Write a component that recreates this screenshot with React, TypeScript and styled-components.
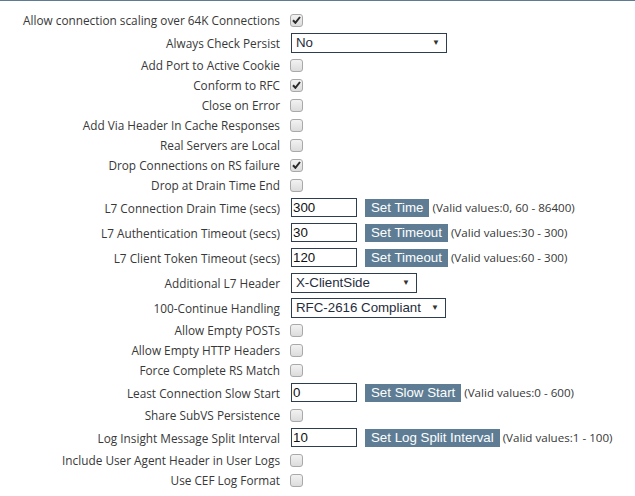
import React from "react";
import styled, { createGlobalStyle } from "styled-components";

const GlobalStyle = createGlobalStyle`
  body {
    margin: 0;
    background: #ffffff;
    font-family: "Open Sans", "Liberation Sans", sans-serif;
    color: #333333;
  }
`;

const Panel = styled.div`
  border-top: 1px solid #5f7b94;
  padding-top: 9px;
  display: grid;
  grid-template-columns: 280px 1fr;
  column-gap: 10px;
`;

const Label = styled.div<{ $tall?: boolean }>`
  height: ${(p) => (p.$tall ? 25 : 20)}px;
  display: flex;
  align-items: center;
  justify-content: flex-end;
  font-size: 11.8px;
  color: #383838;
  white-space: nowrap;
`;

const Control = styled.div<{ $tall?: boolean }>`
  height: ${(p) => (p.$tall ? 25 : 20)}px;
  display: flex;
  align-items: center;
`;

const Box = styled.span`
  width: 11px;
  height: 11px;
  border: 1px solid #a9a9a9;
  border-radius: 3px;
  background: linear-gradient(#f2f2f2, #dcdcdc);
  display: flex;
  align-items: center;
  justify-content: center;
`;

const SelectBox = styled.div<{ $width: number }>`
  box-sizing: border-box;
  width: ${(p) => p.$width}px;
  height: 20px;
  border: 1px solid #2c3e50;
  padding: 0 6px 0 4px;
  margin-left: 1px;
  display: flex;
  align-items: center;
  justify-content: space-between;
  font-family: "Liberation Sans", Arial, sans-serif;
  font-size: 13.3px;
  color: #1f2d3d;
`;

const Arrow = styled.span`
  font-size: 8px;
  color: #333333;
`;

const TextInput = styled.div`
  box-sizing: border-box;
  width: 66px;
  height: 19px;
  border: 1px solid #2c3e50;
  margin-left: 1px;
  padding-left: 1px;
  display: flex;
  align-items: center;
  font-family: "Liberation Sans", Arial, sans-serif;
  font-size: 13.3px;
  color: #111111;
`;

const ActionButton = styled.button`
  height: 18px;
  margin-left: 8px;
  padding: 0 6px;
  border: none;
  background: #5e7d94;
  color: #ffffff;
  font-family: "Liberation Sans", Arial, sans-serif;
  font-size: 13.3px;
  line-height: 18px;
`;

const Hint = styled.span`
  margin-left: 3px;
  font-size: 11.6px;
  color: #383838;
`;

const Check = () => (
  <svg width="9" height="8" viewBox="0 0 9 8">
    <path d="M1 4.2 L3.4 6.8 L8 1" fill="none" stroke="#2b2b2b" strokeWidth="2" />
  </svg>
);

type Row =
  | { kind: "check"; label: string; checked?: boolean }
  | { kind: "select"; label: string; value: string; width: number }
  | { kind: "input"; label: string; value: string; action: string; hint: string };

const rows: Row[] = [
  { kind: "check", label: "Allow connection scaling over 64K Connections", checked: true },
  { kind: "select", label: "Always Check Persist", value: "No", width: 156 },
  { kind: "check", label: "Add Port to Active Cookie" },
  { kind: "check", label: "Conform to RFC", checked: true },
  { kind: "check", label: "Close on Error" },
  { kind: "check", label: "Add Via Header In Cache Responses" },
  { kind: "check", label: "Real Servers are Local" },
  { kind: "check", label: "Drop Connections on RS failure", checked: true },
  { kind: "check", label: "Drop at Drain Time End" },
  { kind: "input", label: "L7 Connection Drain Time (secs)", value: "300", action: "Set Time", hint: "(Valid values:0, 60 - 86400)" },
  { kind: "input", label: "L7 Authentication Timeout (secs)", value: "30", action: "Set Timeout", hint: "(Valid values:30 - 300)" },
  { kind: "input", label: "L7 Client Token Timeout (secs)", value: "120", action: "Set Timeout", hint: "(Valid values:60 - 300)" },
  { kind: "select", label: "Additional L7 Header", value: "X-ClientSide", width: 126 },
  { kind: "select", label: "100-Continue Handling", value: "RFC-2616 Compliant", width: 155 },
  { kind: "check", label: "Allow Empty POSTs" },
  { kind: "check", label: "Allow Empty HTTP Headers" },
  { kind: "check", label: "Force Complete RS Match" },
  { kind: "input", label: "Least Connection Slow Start", value: "0", action: "Set Slow Start", hint: "(Valid values:0 - 600)" },
  { kind: "check", label: "Share SubVS Persistence" },
  { kind: "input", label: "Log Insight Message Split Interval", value: "10", action: "Set Log Split Interval", hint: "(Valid values:1 - 100)" },
  { kind: "check", label: "Include User Agent Header in User Logs" },
  { kind: "check", label: "Use CEF Log Format" },
];

const App = () => (
  <>
    <GlobalStyle />
    <Panel>
      {rows.map((row) => {
        const tall = row.kind !== "check";
        return (
          <React.Fragment key={row.label}>
            <Label $tall={tall}>{row.label}</Label>
            <Control $tall={tall}>
              {row.kind === "check" && <Box>{row.checked && <Check />}</Box>}
              {row.kind === "select" && (
                <SelectBox $width={row.width}>
                  {row.value}
                  <Arrow>▼</Arrow>
                </SelectBox>
              )}
              {row.kind === "input" && (
                <>
                  <TextInput>{row.value}</TextInput>
                  <ActionButton>{row.action}</ActionButton>
                  <Hint>{row.hint}</Hint>
                </>
              )}
            </Control>
          </React.Fragment>
        );
      })}
    </Panel>
  </>
);

export default App;
